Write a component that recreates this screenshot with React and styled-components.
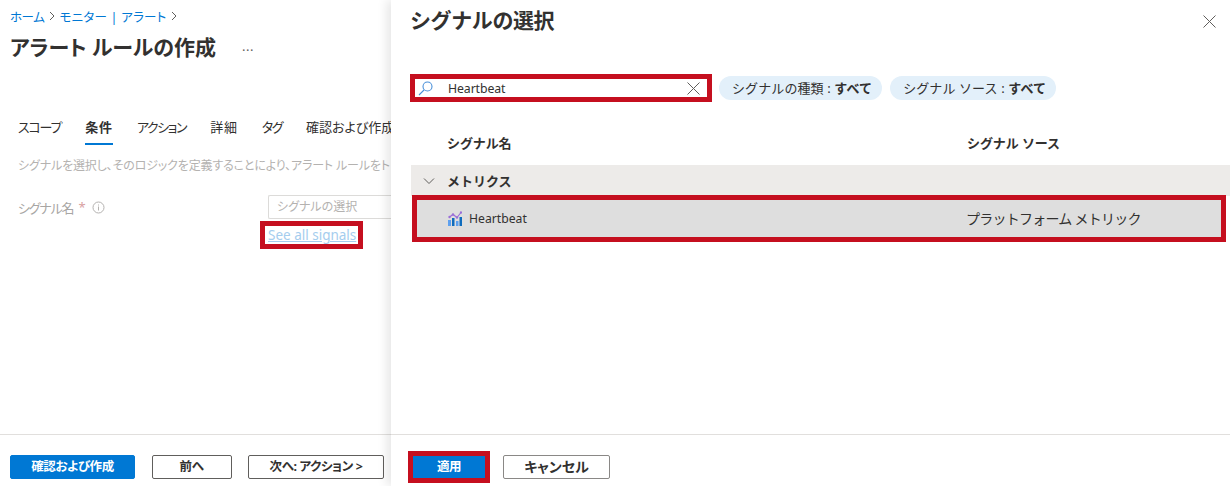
import styled, { createGlobalStyle } from "styled-components";

const GlobalStyle = createGlobalStyle`
  html, body {
    margin: 0;
    padding: 0;
    background: #fff;
    font-family: "Noto Sans", "Noto Sans CJK JP", sans-serif;
  }
  * { box-sizing: border-box; }
`;

const Page = styled.div`
  display: grid;
  grid-template-columns: 391px 1fr;
  width: 1230px;
  height: 486px;
  overflow: hidden;
`;

const Blade = styled.section`
  display: flex;
  flex-direction: column;
  min-width: 0;
  overflow: hidden;
  white-space: nowrap;
  font-feature-settings: "palt";
`;

const Main = styled.div`
  flex: 1;
  padding: 6px 0 0 10px;
`;

const Crumbs = styled.nav`
  display: flex;
  align-items: center;
  gap: 5px;
  height: 20px;
  font-size: 12.5px;
  color: #0078d4;
`;

const Crumb = styled.span`
  letter-spacing: ${(p) => p.$spacing}px;
`;

const Chevron = styled.svg`
  width: 8px;
  height: 10px;
  margin: 0 -1.5px;
  fill: none;
  stroke: #605e5c;
  stroke-width: 1;
`;

const TitleRow = styled.div`
  display: flex;
  align-items: center;
  gap: 26px;
  margin-top: 5px;
  height: 30px;
`;

const Title = styled.h1`
  margin: 0;
  font-size: 21px;
  font-weight: 700;
  color: #323130;
`;

const More = styled.span`
  font-size: 13px;
  color: #605e5c;
  letter-spacing: 0.5px;
`;

const Tabs = styled.div`
  display: flex;
  gap: 24px;
  margin: 52px 0 0 8px;
  height: 32px;
`;

const Tab = styled.div`
  height: 100%;
  font-size: 13px;
  line-height: 28px;
  color: #323130;
  letter-spacing: ${(p) => p.$spacing}px;
  font-weight: ${(p) => (p.$active ? 700 : 400)};
  border-bottom: 2px solid ${(p) => (p.$active ? "#0078d4" : "transparent")};
`;

const Hint = styled.p`
  margin: 11px 0 0 8px;
  font-size: 12px;
  line-height: 20px;
  letter-spacing: -0.15px;
  color: #b4b2b0;
`;

const Field = styled.div`
  display: grid;
  grid-template-columns: 250px 1fr;
  margin: 19px 0 0 8px;
`;

const FieldLabel = styled.div`
  display: flex;
  align-items: center;
  gap: 5px;
  height: 24px;
  font-size: 13px;
  letter-spacing: -1.2px;
  color: #a8a6a4;
`;

const Star = styled.span`
  color: #d8a0a0;
`;

const InfoIcon = styled.svg`
  width: 13px;
  height: 13px;
  margin-left: 3px;
  fill: none;
  stroke: #b4b2b0;
`;

const FieldInput = styled.div`
  height: 24px;
  padding-left: 8px;
  border: 1px solid #dcdbd9;
  border-right: 0;
  border-radius: 2px 0 0 2px;
  font-size: 12px;
  line-height: 22px;
  color: #b4b2b0;
`;

const SignalsLink = styled.a`
  display: block;
  width: 103px;
  height: 28px;
  margin: 2px 0 0 -8px;
  border: 5px solid #c50f1f;
  font-size: 13.5px;
  line-height: 18px;
  padding-left: 3px;
  color: #a5cdee;
  text-decoration: underline;
`;

const Footer = styled.footer`
  display: flex;
  align-items: center;
  height: 52px;
  border-top: 1px solid #e1dfdd;
  padding-top: 13px;
  gap: ${(p) => p.$gap}px;
  padding-left: ${(p) => p.$left}px;
  font-feature-settings: "palt";
`;

const Button = styled.button`
  width: ${(p) => p.$w}px;
  height: 24px;
  padding: 0;
  font-family: inherit;
  font-feature-settings: inherit;
  font-size: ${(p) => (p.$soft ? 14 : 12.5)}px;
  line-height: 22px;
  letter-spacing: ${(p) => (p.$soft ? 0 : -0.4)}px;
  font-weight: 700;
  border-radius: 2px;
  background: ${(p) => (p.$primary ? "#0078d4" : "#fff")};
  color: ${(p) => (p.$primary ? "#fff" : "#323130")};
  border: 1px solid ${(p) => (p.$primary ? "#0078d4" : p.$soft ? "#8a8886" : "#605e5c")};
`;

const ApplyFrame = styled.div`
  display: flex;
  width: 82px;
  height: 32px;
  border: 5px solid #c50f1f;
  margin-top: -1px;
`;

const ApplyButton = styled(Button)`
  width: 100%;
  height: 100%;
  border: 0;
  border-radius: 0;
`;

const Panel = styled.section`
  display: flex;
  flex-direction: column;
  min-width: 0;
  background: #fff;
  box-shadow: -4px 0 10px rgba(0, 0, 0, 0.1);
  z-index: 1;
`;

const PanelBody = styled.div`
  flex: 1;
`;

const PanelHead = styled.header`
  display: flex;
  justify-content: space-between;
  padding: 5px 14px 0 19px;
  height: 74px;
`;

const PanelTitle = styled.h2`
  margin: 0;
  font-size: 21px;
  line-height: 30px;
  font-weight: 700;
  color: #323130;
  letter-spacing: -0.4px;
`;

const CloseIcon = styled.svg`
  width: 13px;
  height: 13px;
  margin-top: 10px;
  fill: none;
  stroke: #605e5c;
  stroke-width: 1;
`;

const Filters = styled.div`
  display: flex;
  align-items: center;
  gap: 8px;
  padding-left: 19px;
`;

const SearchBox = styled.div`
  display: flex;
  align-items: center;
  width: 302px;
  height: 28px;
  margin-right: -1px;
  padding: 0 7px 0 3px;
  border: 5px solid #c50f1f;
  font-size: 12.3px;
  line-height: 20px;
  color: #323130;
`;

const SearchText = styled.span`
  flex: 1;
  margin-left: 15px;
  padding-top: 2px;
  letter-spacing: -0.1px;
`;

const SearchIcon = styled.svg`
  width: 15px;
  height: 15px;
  fill: none;
  stroke: #4a90d9;
  stroke-width: 1.1;
`;

const ClearIcon = styled.svg`
  width: 13px;
  height: 13px;
  fill: none;
  stroke: #605e5c;
`;

const Pill = styled.div`
  height: 24px;
  padding: 1px 10px 0 13px;
  border-radius: 12px;
  background: #e3f0fa;
  font-size: 13px;
  line-height: 23px;
  color: #323130;
  white-space: nowrap;
  letter-spacing: 0.1px;

  b {
    font-weight: 700;
  }
`;

const HeaderRow = styled.div`
  display: grid;
  grid-template-columns: 520px 1fr;
  align-items: center;
  height: 38px;
  margin: 21px 0 0 20px;
  padding-left: 36px;
  font-size: 13px;
  font-weight: 700;
  color: #323130;
  letter-spacing: -0.1px;
`;

const GroupRow = styled.div`
  display: flex;
  align-items: center;
  gap: 12px;
  height: 31px;
  margin: 4px 0 0 20px;
  padding-left: 12px;
  background: #edebe9;
  font-size: 13px;
  font-weight: 700;
  color: #323130;
`;

const GroupChevron = styled.svg`
  width: 12px;
  height: 8px;
  fill: none;
  stroke: #605e5c;
`;

const SignalRow = styled.div`
  display: grid;
  grid-template-columns: 519px 1fr;
  align-items: center;
  height: 47px;
  margin: -1px 4px 0 21px;
  padding-left: 30px;
  background: #dedede;
  border: 5px solid #c50f1f;
  font-size: 13px;
  color: #323130;
`;

const SignalName = styled.div`
  display: flex;
  align-items: center;
  gap: 7px;
  padding-left: 1px;
  font-size: 12.2px;
`;

const SourceName = styled.div`
  font-size: 14px;
  letter-spacing: -0.75px;
  margin-top: -1px;
`;

function ChevronRight() {
  return (
    <Chevron viewBox="0 0 8 10">
      <path d="M2 1l4 4-4 4" />
    </Chevron>
  );
}

function MetricIcon() {
  return (
    <svg width="14" height="15" viewBox="0 0 14 15">
      <rect x="0" y="9" width="3" height="6" fill="#5ea0ef" />
      <rect x="4" y="7" width="2.5" height="8" fill="#0f6cbd" />
      <rect x="8" y="10" width="2.5" height="5" fill="#5ea0ef" />
      <rect x="11.5" y="6" width="2.5" height="9" fill="#0f6cbd" />
      <path d="M1.5 6L5 3.5l4 3 4-5" fill="none" stroke="#9b6fd8" strokeWidth="1.2" />
      <circle cx="1.5" cy="6" r="1.2" fill="#9b6fd8" />
      <circle cx="5" cy="3.5" r="1.2" fill="#9b6fd8" />
      <circle cx="9" cy="6.5" r="1.2" fill="#9b6fd8" />
      <circle cx="13" cy="1.5" r="1.2" fill="#9b6fd8" />
    </svg>
  );
}

export default function App() {
  return (
    <Page>
      <GlobalStyle />
      <Blade>
        <Main>
          <Crumbs>
            <Crumb $spacing={-0.45}>ホーム</Crumb>
            <ChevronRight />
            <Crumb $spacing={0.25}>モニター | アラート</Crumb>
            <ChevronRight />
          </Crumbs>
          <TitleRow>
            <Title>アラート ルールの作成</Title>
            <More>...</More>
          </TitleRow>
          <Tabs>
            <Tab $spacing={-1.2}>スコープ</Tab>
            <Tab $active $spacing={0.8}>条件</Tab>
            <Tab $spacing={-1.4}>アクション</Tab>
            <Tab $spacing={0.8}>詳細</Tab>
            <Tab $spacing={-1.5}>タグ</Tab>
            <Tab $spacing={0}>確認および作成</Tab>
          </Tabs>
          <Hint>シグナルを選択し、そのロジックを定義することにより、アラート ルールをトリガーします。</Hint>
          <Field>
            <FieldLabel>
              シグナル名 <Star>*</Star>
              <InfoIcon viewBox="0 0 13 13">
                <circle cx="6.5" cy="6.5" r="5.5" />
                <path d="M6.5 5.5v4M6.5 3.5v1" />
              </InfoIcon>
            </FieldLabel>
            <div>
              <FieldInput>シグナルの選択</FieldInput>
              <SignalsLink>See all signals</SignalsLink>
            </div>
          </Field>
        </Main>
        <Footer $gap={16.5} $left={10}>
          <Button $primary $w={125}>確認および作成</Button>
          <Button $w={80}>前へ</Button>
          <Button $w={136}>次へ: アクション &gt;</Button>
        </Footer>
      </Blade>
      <Panel>
        <PanelBody>
          <PanelHead>
            <PanelTitle>シグナルの選択</PanelTitle>
            <CloseIcon viewBox="0 0 13 13">
              <path d="M.5.5l12 12M12.5.5l-12 12" />
            </CloseIcon>
          </PanelHead>
          <Filters>
            <SearchBox>
              <SearchIcon viewBox="0 0 15 15">
                <circle cx="9.5" cy="5.5" r="4.5" />
                <path d="M6 9l-5 5" />
              </SearchIcon>
              <SearchText>Heartbeat</SearchText>
              <ClearIcon viewBox="0 0 13 13">
                <path d="M.5.5l12 12M12.5.5l-12 12" />
              </ClearIcon>
            </SearchBox>
            <Pill>シグナルの種類 : <b>すべて</b></Pill>
            <Pill>シグナル ソース : <b>すべて</b></Pill>
          </Filters>
          <HeaderRow>
            <span>シグナル名</span>
            <span>シグナル ソース</span>
          </HeaderRow>
          <GroupRow>
            <GroupChevron viewBox="0 0 12 8">
              <path d="M1 1.5l5 5 5-5" />
            </GroupChevron>
            メトリクス
          </GroupRow>
          <SignalRow>
            <SignalName>
              <MetricIcon />
              Heartbeat
            </SignalName>
            <SourceName>プラットフォーム メトリック</SourceName>
          </SignalRow>
        </PanelBody>
        <Footer $gap={13} $left={17}>
          <ApplyFrame>
            <ApplyButton $primary>適用</ApplyButton>
          </ApplyFrame>
          <Button $soft $w={107}>キャンセル</Button>
        </Footer>
      </Panel>
    </Page>
  );
}
